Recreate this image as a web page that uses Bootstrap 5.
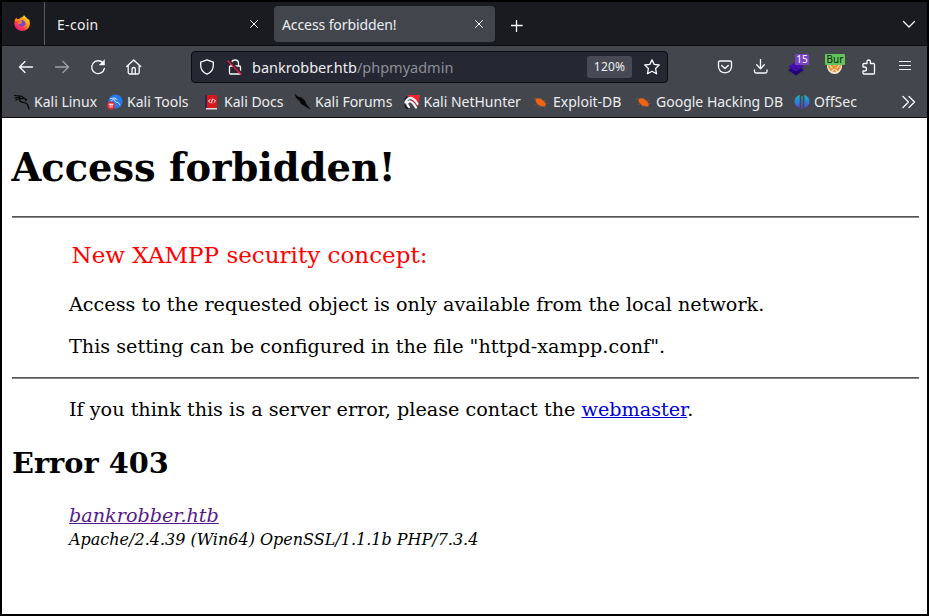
<!DOCTYPE html>
<html lang="en">
<head>
<meta charset="utf-8">
<title>Access forbidden!</title>
<link href="https://cdn.jsdelivr.net/npm/bootstrap@5.3.0/dist/css/bootstrap.min.css" rel="stylesheet">
<style>
html,body{height:100%;margin:0}
body{background:#fff;overflow:hidden}
svg{display:block;flex:none;fill:none;stroke:#fbfbfe;stroke-width:1.3;stroke-linecap:round;stroke-linejoin:round}
.window-frame{width:929px;height:616px;border:2px solid #000;overflow:hidden;background:#fff}
.chrome{font:14px/20px "Noto Sans",sans-serif;color:#ededf0}
.tabstrip{height:44px;background:#1a1b20;border-bottom:1px solid #0c0c0f}
.home-tab{width:43px;height:43px;border-right:1px solid #5b5b61;padding-right:2px}
.tab-item{height:36px;width:221px;border-radius:4px;padding:0 9px 0 8px;letter-spacing:-.1px}
.tab-item span{padding-top:2px}
.tab-first{width:229px;padding:0 16px 0 12px;letter-spacing:.3px}
.tab-active{background:#42454c}
.toolbar{height:41px;background:#43464d;padding:0 4px 0 6px}
.tool{width:36px;height:40px}
.address{width:477px;height:32px;margin-left:39px;margin-right:39px;background:#252833;border:1px solid #0b0c10;border-radius:4px;padding-left:7px;padding-right:7px}
.lock-icon,.star-icon{margin-left:12px}
.url-text{font-size:14.5px;padding-left:9px}
.path-part{color:#8c8d95}
.zoom-chip{width:45px;height:22px;border-radius:3px;background:#474a55;font-size:12px;letter-spacing:.2px}
.bookmarks{height:31px;background:#43464d;border-bottom:1px solid #0c0c0d;display:grid;grid-template-columns:93px 97px 90px 109.5px 129.5px 103px 158px 105px 20px;padding-left:12px;align-items:center}
.bookmarks>div{gap:4px;white-space:nowrap}
.ext-badge{position:absolute;height:11px;top:7px;font-size:10px;line-height:11px;border-radius:1px;text-align:center;white-space:nowrap}
.count-badge{left:16px;width:14px;background:#7742c8;color:#fff}
.burp-badge{left:10px;width:20px;background:#60c65c;color:#102010}
.document{font:19.2px/23px "DejaVu Serif",serif;color:#000;padding:27px 8px 0 10px}
.document h1{font-size:38.4px;line-height:46px;font-weight:700;margin:0 0 25px -.5px}
.document hr{margin:0;border:0;height:2px;background:linear-gradient(#555 50%,#888 50%);opacity:1}
.document p{margin:0 57px}
.document h2{font-size:28.8px;line-height:34px;font-weight:700;margin:25px 0 0}
.document .config-note{margin-top:19px;margin-bottom:19px}
.document .contact-note{margin-top:19px}
.concept{font-size:23.04px;line-height:28px;color:#f00;padding:23px 0 24px 59.5px}
.link-new{color:#0000d8}.link-seen{color:#551a8b}
.server-sig{font-size:16px;line-height:20px}
</style>
<script src="https://cdn.jsdelivr.net/npm/bootstrap@5.3.0/dist/js/bootstrap.bundle.min.js"></script>
</head>
<body>
<svg class="position-absolute" width="0" height="0">
<defs>
<linearGradient id="fire" x1="1" y1="0" x2=".2" y2="1"><stop offset="0" stop-color="#fff44f"/><stop offset=".45" stop-color="#ff980e"/><stop offset=".75" stop-color="#ff3750"/><stop offset="1" stop-color="#e31587"/></linearGradient>
<linearGradient id="ofs" x1="0" y1="0" x2="0" y2="1"><stop offset="0" stop-color="#17b5ba"/><stop offset=".5" stop-color="#2a83d8"/><stop offset="1" stop-color="#6a34d6"/></linearGradient>
<symbol id="bug" viewBox="0 0 16 16"><path d="M2.500 5C4.500 3.500 8 4.500 10 6.500C12 8 13.500 10.500 12.500 11.800C11 13 7 12.500 5 10.500C3.500 9 2 7 2.500 5Z" fill="#f26411" stroke="none"/><path d="M3 5L.5 4.500M5 9.500L2 10.500M7 5L7.500 3.500M10 7L13 6.500M12 9.500L14.500 9M7 12L5.500 13M11 12L12 13.500" stroke="#a05a34" stroke-width=".6"/></symbol>
</defs>
</svg>
<div class="window-frame">
<header class="chrome">
  <div class="tabstrip d-flex align-items-center">
    <div class="home-tab d-flex align-items-center justify-content-center">
      <svg width="16" height="17" viewBox="0 0 16 17"><path d="M10 0C11 2 13 2.500 14 4.500C14.500 5 15 4 15 4C16.500 8 16.200 11.500 13.500 14C10.500 16.800 5 16.500 2.300 13.600C-.3 11 0 6.500 1.500 3.800L2.500 2.500L3 4L5 4C6 2.500 8.500 3 10 0Z" fill="url(#fire)" stroke="none"/><path d="M5.500 5.500C8 4 11.500 5.500 11.500 8.500C11.500 11 8 12.500 5.700 10.700C5 10 4.600 9 5 8.500L7.500 8.300L6 7Z" fill="#7542e5" stroke="none"/><path d="M1.500 5C3 4.500 4.500 4.500 5.500 5.500L7.500 6.500L6.800 7.600L5 8.500" stroke="#ff980e" stroke-width="1.200"/></svg>
    </div>
    <div class="tab-item tab-first d-flex align-items-center justify-content-between"><span>E-coin</span><svg width="8" height="8" viewBox="0 0 8 8"><path d="M.5 .5L7.500 7.500M7.500 .5L.5 7.500" stroke-width="1"/></svg></div>
    <div class="tab-item tab-active d-flex align-items-center justify-content-between pe-2"><span>Access forbidden!</span><svg class="me-1" width="8" height="8" viewBox="0 0 8 8"><path d="M.5 .5L7.500 7.500M7.500 .5L.5 7.500" stroke-width="1"/></svg></div>
    <svg class="ms-3 mt-1" width="12" height="12" viewBox="0 0 12 12"><path d="M5.500 .5V11.500M.2 5.500H11.200"/></svg>
    <svg class="ms-auto me-2" width="20" height="16" viewBox="0 0 20 16"><path d="M4.500 5.500L10 11L15.500 5.500"/></svg>
  </div>
  <div class="toolbar d-flex align-items-center">
    <div class="tool d-flex align-items-center justify-content-center"><svg width="16" height="16" viewBox="0 0 16 16"><path d="M14.500 8H2M7 2.500L1.500 8L7 13.500"/></svg></div>
    <div class="tool d-flex align-items-center justify-content-center opacity-50"><svg width="16" height="16" viewBox="0 0 16 16"><path d="M1.500 8H14M9 2.500L14.500 8L9 13.500"/></svg></div>
    <div class="tool d-flex align-items-center justify-content-center"><svg width="16" height="16" viewBox="0 0 16 16"><path d="M13 4A6.400 6.400 0 1 0 14.400 9.500"/><path d="M14.500 1V6H9.500Z" fill="#fbfbfe" stroke-width=".5"/></svg></div>
    <div class="tool d-flex align-items-center justify-content-center"><svg width="16" height="16" viewBox="0 0 16 16"><path d="M.7 7.500L7.700 1L14.700 7.500M2.200 6.500V13.500Q2.200 15 3.700 15H11.700Q13.200 15 13.200 13.500V6.500M6 14.500V10Q6 8.500 7.700 8.500Q9.300 8.500 9.300 10V14.500"/></svg></div>
    <div class="address d-flex align-items-center">
      <svg width="16" height="16" viewBox="0 0 16 16"><path d="M8 .8L14.300 3.200V6.500C14.300 10.500 12 13.500 8 15.200C4 13.500 1.700 10.500 1.700 6.500V3.200Z"/></svg>
      <svg class="lock-icon" width="16" height="16" viewBox="0 0 16 16"><path d="M4.500 7V4.500Q4.500 1 8 1Q11.500 1 11.500 4.500V7M3.500 7H12.500Q13.500 7 13.500 8V14Q13.500 15 12.500 15H3.500Q2.500 15 2.500 14V8Q2.500 7 3.500 7"/><path d="M2 1.500L15 14.500" stroke="#252833" stroke-width="2"/><path d="M1 2L14 15.200" stroke="#f0183f" stroke-width="1.400"/></svg>
      <span class="url-text">bankrobber.htb<span class="path-part">/phpmyadmin</span></span>
      <span class="zoom-chip d-flex align-items-center justify-content-center ms-auto">120%</span>
      <svg class="star-icon" width="16" height="16" viewBox="0 0 16 16"><path d="M8 .8L10.200 5.400L15.200 6L11.600 9.500L12.500 14.800L8 12.300L3.500 14.800L4.400 9.500L.8 6L5.800 5.400Z"/></svg>
    </div>
    <div class="tool d-flex align-items-center justify-content-center"><svg width="16" height="16" viewBox="0 0 16 16"><path d="M3 2H13Q14.500 2 14.500 3.500V7.500Q14 13.500 8 13.800Q2 13.500 1.500 7.500V3.500Q1.500 2 3 2ZM4.700 6.500L8 9.500L11.300 6.500"/></svg></div>
    <div class="tool d-flex align-items-center justify-content-center"><svg width="16" height="16" viewBox="0 0 16 16"><path d="M7.500 .5V9.500M3.700 5.800L7.500 9.800L11.300 5.800M1.500 11V12.500Q1.500 14 3 14H12.500Q14 14 14 12.500V11"/></svg></div>
    <div class="tool position-relative"><svg class="ms-2 mt-3" width="18" height="14" viewBox="0 0 18 14"><path d="M1 7L9 2L17 7L9 12.500Z" fill="#230078" stroke="none"/><path d="M1 3.500L9 -1L17 3.500L9 8.500Z" fill="#4210a8" stroke="none"/></svg><span class="ext-badge count-badge">15</span></div>
    <div class="tool position-relative"><svg class="ms-2 mt-2 pt-1 ps-1" width="20" height="20" viewBox="0 0 16 16"><circle cx="7.500" cy="7.500" r="7.500" fill="#f3e4cb" stroke="none"/><path d="M1 6L5 5L7.500 7L10 5L14 6Q13 13 7.500 13Q2 13 1 6Z" fill="#ef9030" stroke="none"/><path d="M3 6.500L5 9M12 6.500L10 9M5 12.500Q7.500 8 10 12.500" stroke="#fff3dc" stroke-width="1.100"/></svg><span class="ext-badge burp-badge">Bur</span></div>
    <div class="tool d-flex align-items-center justify-content-center"><svg width="16" height="16" viewBox="0 0 16 16"><path d="M2 8V5.500Q2 4.500 3 4.500H6V3Q6 1 7.700 1Q9.400 1 9.400 3V4.500H12.500Q13.500 4.500 13.500 5.500V14Q13.500 15 12.500 15H3Q2 15 2 14V12H3.500Q5.500 12 5.500 10Q5.500 8 3.500 8Z"/></svg></div>
    <div class="tool d-flex align-items-center justify-content-center"><svg width="14" height="12" viewBox="0 0 14 12"><path d="M1.500 .5H12.500M1.500 4.500H12.500M1.500 8.500H12.500" stroke-width="1.100"/></svg></div>
  </div>
  <div class="bookmarks">
    <div class="d-flex align-items-center"><svg width="16" height="16" viewBox="0 0 16 16"><path d="M.5 1.500L7 2L10 4M1 4L6 3M2 6L6 4M10 4.500C6 4 4.500 6 6.500 7.500C8.500 9 12 8 13.500 10.500L15 15M10 4.500L12.500 5.500L11.500 6.500" stroke="#050506" stroke-width="1.200"/></svg>Kali Linux</div>
    <div class="d-flex align-items-center"><svg width="16" height="16" viewBox="0 0 16 16"><circle cx="8.500" cy="7.500" r="7" fill="#2878ee" stroke="none"/><path d="M3.500 4.500L8 4L10 5.500M8 5Q6 7 9 8Q12 8 13 11M4 7L7 5" stroke="#d7e9ff" stroke-width=".9"/><circle cx="4" cy="11.500" r="3.900" fill="#e22c34" stroke="none"/><path d="M2 10.200H6M3.200 10.200V13.200M5 10.200V13.200" stroke="#fff" stroke-width=".9"/></svg>Kali Tools</div>
    <div class="d-flex align-items-center"><svg width="16" height="16" viewBox="0 0 16 16"><path d="M2 1H13V14H2Z" fill="#d7191f" stroke="none"/><path d="M1 1H3V14H1Z" fill="#222b51" stroke="none"/><path d="M2 14H13V15.500H2Z" fill="#e2dcda" stroke="none"/><path d="M6 5.500L4.500 7L6 8.500M10 5.500L11.500 7L10 8.500M8.500 5L7.500 9" stroke="#fff" stroke-width="1"/></svg>Kali Docs</div>
    <div class="d-flex align-items-center"><svg width="17" height="16" viewBox="0 0 17 16"><path d="M1 .5L4 3L7 3.500L11 7L12 10L16 15L11 12L7 9.500L6 7L3 4.500Z" fill="#050506" stroke="#050506" stroke-width=".6"/></svg>Kali Forums</div>
    <div class="d-flex align-items-center"><svg width="16" height="16" viewBox="0 0 16 16"><path d="M3 1H16L14 13L9 7Z" fill="#f0242d" stroke="none"/><path d="M1.500 8.500Q3 4 6.500 3.800Q9.500 4 12 7.500L13.500 10M5 13Q1.500 9 5 7.500Q8 6.500 12 13.500" stroke="#f7f2f3" stroke-width="2.200"/><path d="M1 11Q1 14 4 14.500M1 5L3 3" stroke="#101013" stroke-width="1.200"/></svg>Kali NetHunter</div>
    <div class="d-flex align-items-center"><svg width="16" height="16"><use href="#bug"/></svg>Exploit-DB</div>
    <div class="d-flex align-items-center"><svg width="16" height="16"><use href="#bug"/></svg>Google Hacking DB</div>
    <div class="d-flex align-items-center"><svg width="16" height="16" viewBox="0 0 16 16"><path d="M5.700 .8V14Q.5 12 .5 7.500Q.5 3 5.700 .8ZM10.300 .8V14Q15.500 12 15.500 7.500Q15.500 3 10.300 .8ZM7.400 2H8.600V15H7.400Z" fill="url(#ofs)" stroke="none"/></svg>OffSec</div>
    <svg width="20" height="16" viewBox="0 0 20 16"><path d="M4 2.500L9.500 8L4 13.500M10 2.500L15.500 8L10 13.500"/></svg>
  </div>
</header>
<main class="document">
  <h1>Access forbidden!</h1>
  <hr>
  <div class="concept">New XAMPP security concept:</div>
  <p>Access to the requested object is only available from the local network.</p>
  <p class="config-note">This setting can be configured in the file "httpd-xampp.conf".</p>
  <hr>
  <p class="contact-note">If you think this is a server error, please contact the <a class="link-new" href="#">webmaster</a>.</p>
  <h2>Error 403</h2>
  <p class="pt-4 fst-italic"><a class="link-seen" href="#">bankrobber.htb</a><br><span class="server-sig">Apache/2.4.39 (Win64) OpenSSL/1.1.1b PHP/7.3.4</span></p>
</main>
</div>
</body>
</html>
